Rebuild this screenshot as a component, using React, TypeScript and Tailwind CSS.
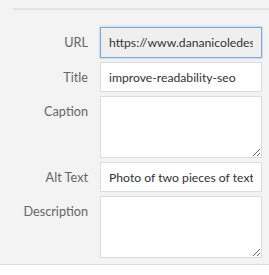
import React from 'react';

const fields = [
  { label: 'URL', value: 'https://www.dananicoledesign.com/wp-content/uploads/improve-readability-seo.jpg', kind: 'url' },
  { label: 'Title', value: 'improve-readability-seo', kind: 'input' },
  { label: 'Caption', value: '', kind: 'textarea' },
  { label: 'Alt Text', value: 'Photo of two pieces of text', kind: 'input' },
  { label: 'Description', value: '', kind: 'textarea' },
];

export default function App() {
  return (
    <div className="w-[269px] h-[275px] flex flex-col bg-white font-['Lato',sans-serif] overflow-hidden">
      <div className="h-[265px] bg-[#f3f3f3] border-b border-[#dddddd] pt-[8px]">
        <div className="ml-[13px] border-t-2 border-[#e2e2e2] pt-[17px] pr-[7px] flex flex-col gap-[4px]">
          {fields.map((f) => (
            <div key={f.label} className="flex items-start gap-[12px]">
              <label className="w-[75px] shrink-0 text-right text-[#666666] text-[12.7px] pt-[6px] leading-[18px]">
                {f.label}
              </label>
              {f.kind === 'textarea' ? (
                <textarea
                  defaultValue={f.value}
                  className="w-[162px] h-[62px] bg-white border border-[#dddddd] px-[8px] py-[5px] text-[12.2px] text-[#333333] outline-none resize-y"
                />
              ) : (
                <input
                  readOnly={f.kind === 'url'}
                  defaultValue={f.value}
                  className={
                    f.kind === 'url'
                      ? 'w-[162px] h-[31px] bg-[#efefef] border border-[#7fa8d6] shadow-[0_0_2px_rgba(30,140,190,0.5)] px-[8px] text-[12.2px] text-[#333333] outline-none'
                      : 'w-[162px] h-[30px] bg-white border border-[#dddddd] px-[8px] text-[12.2px] text-[#333333] outline-none'
                  }
                />
              )}
            </div>
          ))}
        </div>
      </div>
    </div>
  );
}
